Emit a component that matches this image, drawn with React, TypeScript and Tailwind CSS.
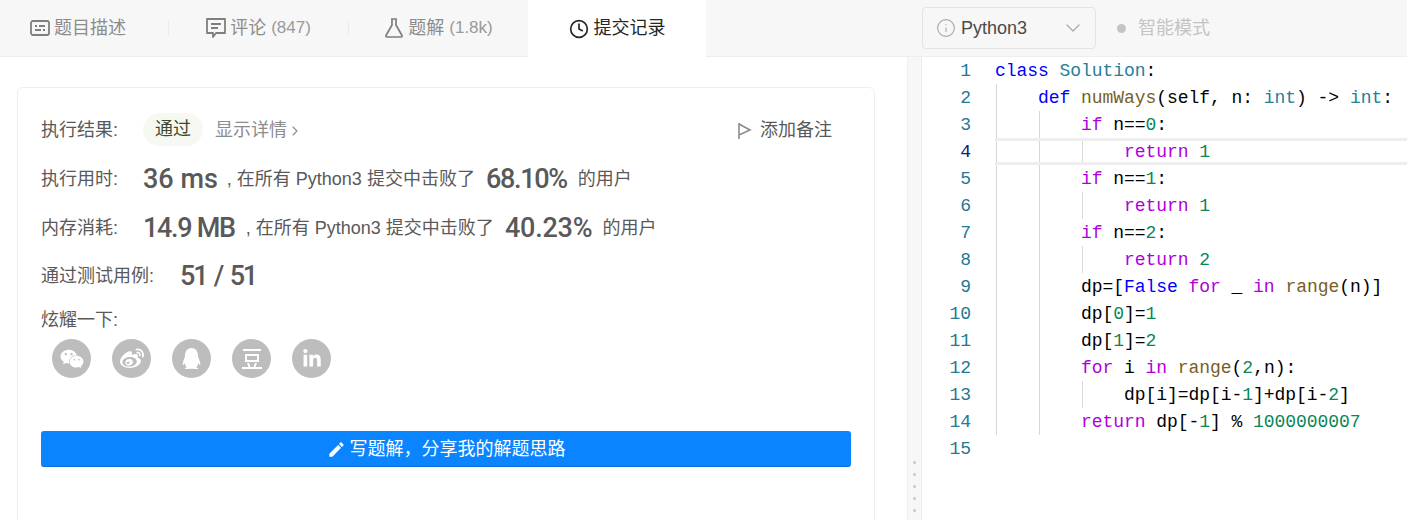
import { ChevronDown, ChevronRight, Clock, Info } from "lucide-react";
import { FaLinkedinIn, FaQq, FaWeibo, FaWeixin } from "react-icons/fa";
import { MdEdit } from "react-icons/md";
import type { ReactNode } from "react";

const sans = "font-['Liberation_Sans','Noto_Sans_CJK_SC',sans-serif]";

type Token = [string, string];

const KW = "text-[#0000ff]";
const CTL = "text-[#af00db]";
const TYPE = "text-[#267f99]";
const FN = "text-[#795e26]";
const NUM = "text-[#098658]";
const TXT = "text-[#000000]";

// one entry per editor line
const codeLines: { guides: number; tokens: Token[] }[] = [
  { guides: 0, tokens: [["class", KW], [" ", TXT], ["Solution", TYPE], [":", TXT]] },
  { guides: 1, tokens: [["    ", TXT], ["def", KW], [" ", TXT], ["numWays", FN], ["(self, n: ", TXT], ["int", TYPE], [") -> ", TXT], ["int", TYPE], [":", TXT]] },
  { guides: 2, tokens: [["        ", TXT], ["if", CTL], [" n==", TXT], ["0", NUM], [":", TXT]] },
  { guides: 3, tokens: [["            ", TXT], ["return", CTL], [" ", TXT], ["1", NUM]] },
  { guides: 2, tokens: [["        ", TXT], ["if", CTL], [" n==", TXT], ["1", NUM], [":", TXT]] },
  { guides: 3, tokens: [["            ", TXT], ["return", CTL], [" ", TXT], ["1", NUM]] },
  { guides: 2, tokens: [["        ", TXT], ["if", CTL], [" n==", TXT], ["2", NUM], [":", TXT]] },
  { guides: 3, tokens: [["            ", TXT], ["return", CTL], [" ", TXT], ["2", NUM]] },
  { guides: 2, tokens: [["        dp=[", TXT], ["False", KW], [" ", TXT], ["for", CTL], [" _ ", TXT], ["in", CTL], [" ", TXT], ["range", FN], ["(n)]", TXT]] },
  { guides: 2, tokens: [["        dp[", TXT], ["0", NUM], ["]=", TXT], ["1", NUM]] },
  { guides: 2, tokens: [["        dp[", TXT], ["1", NUM], ["]=", TXT], ["2", NUM]] },
  { guides: 2, tokens: [["        ", TXT], ["for", CTL], [" i ", TXT], ["in", CTL], [" ", TXT], ["range", FN], ["(", TXT], ["2", NUM], [",n):", TXT]] },
  { guides: 3, tokens: [["            dp[i]=dp[i-", TXT], ["1", NUM], ["]+dp[i-", TXT], ["2", NUM], ["]", TXT]] },
  { guides: 2, tokens: [["        ", TXT], ["return", CTL], [" dp[-", TXT], ["1", NUM], ["] % ", TXT], ["1000000007", NUM]] },
  { guides: 0, tokens: [] },
];

function DescIcon() {
  return (
    <svg width="20" height="20" viewBox="0 0 20 20" fill="none" stroke="#7f7f7f" strokeWidth="1.8">
      <rect x="1" y="3" width="18" height="14" rx="2" />
      <path d="M5 8h2M9 8h6M5 12h6M13 12h2" />
    </svg>
  );
}

function CommentIcon() {
  return (
    <svg width="20" height="20" viewBox="0 0 20 20" fill="none" stroke="#7f7f7f" strokeWidth="1.8">
      <path d="M1 1h18v14H10l-3 4v-4H1z" strokeLinejoin="round" />
      <path d="M5 6h10M5 10h7" />
    </svg>
  );
}

function FlaskIcon() {
  return (
    <svg width="20" height="20" viewBox="0 0 20 20" fill="none" stroke="#7f7f7f" strokeWidth="1.7">
      <path d="M7 1h6M8 1v6L2 17.5q-.5 1.5 1 1.5h14q1.5 0 1-1.5L12 7V1" strokeLinejoin="round" />
    </svg>
  );
}

function DoubanIcon() {
  return (
    <svg width="24" height="24" viewBox="0 0 24 24" fill="none" stroke="white" strokeWidth="2">
      <path d="M3 3h18M6 8h12v6H6zM8 16l1.5 4M16 16l-1.5 4M2 21h20" />
    </svg>
  );
}

function Tab({ icon, label, count, className }: { icon: ReactNode; label: string; count?: string; className: string }) {
  return (
    <div className={`flex h-[56px] items-center justify-center gap-[4px] text-[18px] text-[#8c8c8c] ${className}`}>
      {icon}
      <span>{label}</span>
      {count && <span className="ml-[1px] text-[17px] text-[#9a9a9a]">{count}</span>}
    </div>
  );
}

function Stat({ children, className = "" }: { children: ReactNode; className?: string }) {
  return <span className={`font-['Roboto',sans-serif] font-medium text-[27px] text-[#595959] ${className}`}>{children}</span>;
}

function SocialBtn({ children }: { children: ReactNode }) {
  return <div className="flex h-[39px] w-[39px] items-center justify-center rounded-full bg-[#bdbdbd] text-white">{children}</div>;
}

export default function App() {
  return (
    <div className={`flex h-[520px] w-[1407px] flex-col overflow-hidden bg-white ${sans}`}>
      {/* top bar */}
      <div className="flex h-[57px] shrink-0 border-b border-[#eeeeee] bg-[#f7f7f7]">
        <div className="flex w-[706px] shrink-0">
          <div className="flex h-[56px] w-[168px] items-center">
            <Tab icon={<DescIcon />} label="题目描述" className="w-full pr-[12px]" />
          </div>
          <div className="my-[20px] w-px bg-[#ebebeb]" />
          <Tab icon={<CommentIcon />} label="评论" count="(847)" className="w-[179px]" />
          <div className="my-[20px] w-px bg-[#ebebeb]" />
          <Tab icon={<FlaskIcon />} label="题解" count="(1.8k)" className="w-[179px]" />
          <div className="z-10 flex h-[57px] w-[178px] items-center justify-center gap-[5px] bg-white text-[18px] text-[#262626]">
            <Clock size={20} strokeWidth={2} />
            <span>提交记录</span>
          </div>
        </div>
        <div className="ml-[216px] flex items-center">
          <div className="flex h-[42px] w-[174px] items-center rounded-[4px] border border-[#e4e4e4] pl-[13px] pr-[10px] text-[#595959]">
            <Info size={20} strokeWidth={1.4} className="text-[#a8a8a8]" />
            <span className="ml-[5px] flex-1 text-[18px] text-[#4a4a4a]">Python3</span>
            <ChevronDown size={24} strokeWidth={1.2} className="text-[#a8a8a8]" />
          </div>
          <div className="ml-[21px] h-[9px] w-[9px] rounded-full bg-[#c4c4c4]" />
          <span className="ml-[12px] text-[18px] text-[#c4c4c4]">智能模式</span>
        </div>
      </div>

      <div className="flex min-h-0 flex-1">
        {/* left pane */}
        <div className="w-[907px] shrink-0 pl-[17px] pr-[32px] pt-[30px]">
          <div className="h-[460px] rounded-[6px] border border-[#eeeeee] pl-[23px] pr-[23px] pt-[26px] text-[18px] text-[#595959]">
            <div className="flex h-[33px] items-center">
              <span className="w-[102px]">执行结果:</span>
              <span className="mb-[2px] flex h-[33px] w-[60px] items-center justify-center rounded-full bg-[#f6f9f1] text-[#3d4a2f]">通过</span>
              <span className="ml-[12px] text-[#8c8c8c]">显示详情</span>
              <ChevronRight size={16} strokeWidth={1.6} className="text-[#8c8c8c]" />
              <svg className="ml-[434px]" width="16" height="18" viewBox="0 0 16 18" fill="none" stroke="#8c8c8c" strokeWidth="1.6">
                <path d="M2 1v16M2 2l11 6-11 5" />
              </svg>
              <span className="ml-[7px]">添加备注</span>
            </div>
            <div className="mt-[16px] flex h-[33px] items-center">
              <span className="w-[102px]">执行用时:</span>
              <Stat>36 ms</Stat>
              <span className="ml-[9px]">, 在所有 Python3 提交中击败了</span>
              <Stat className="ml-[11px] tracking-[-1.3px]">68.10%</Stat>
              <span className="ml-[11px]">的用户</span>
            </div>
            <div className="mt-[16px] flex h-[33px] items-center">
              <span className="w-[102px]">内存消耗:</span>
              <Stat className="tracking-[-1.3px]">14.9 MB</Stat>
              <span className="ml-[11px]">, 在所有 Python3 提交中击败了</span>
              <Stat className="ml-[11px] tracking-[-0.2px]">40.23%</Stat>
              <span className="ml-[10px]">的用户</span>
            </div>
            <div className="mt-[15px] flex h-[33px] items-center">
              <span className="w-[139px]">通过测试用例:</span>
              <Stat className="tracking-[-2.2px] [word-spacing:3px]">51 / 51</Stat>
            </div>
            <div className="mt-[15px] leading-[24px]">炫耀一下:</div>
            <div className="ml-[11px] mt-[7px] flex gap-[21px]">
              <SocialBtn><FaWeixin size={24} /></SocialBtn>
              <SocialBtn><FaWeibo size={24} /></SocialBtn>
              <SocialBtn><FaQq size={21} /></SocialBtn>
              <SocialBtn><DoubanIcon /></SocialBtn>
              <SocialBtn><FaLinkedinIn size={20} /></SocialBtn>
            </div>
            <button className="mt-[53px] flex h-[36px] w-[810px] items-center justify-center gap-[4px] rounded-[3px] border-b border-[#0b6fd6] bg-[#0a84ff] pt-[2px] text-[18px] text-white">
              <MdEdit size={19} />
              <span>写题解，分享我的解题思路</span>
            </button>
          </div>
        </div>

        {/* splitter */}
        <div className="flex w-[15px] shrink-0 flex-col items-center justify-end gap-[9px] border-x border-[#eeeeee] bg-[#f7f7f7] pb-[8px]">
          {[0, 1, 2, 3, 4].map((i) => (
            <div key={i} className="h-[3px] w-[3px] rounded-full bg-[#c8c8c8]" />
          ))}
        </div>

        {/* editor */}
        <div className="min-w-0 flex-1 overflow-hidden font-['Liberation_Mono','DejaVu_Sans_Mono',monospace] text-[18px]">
          {codeLines.map((line, idx) => (
            <div key={idx} className={`flex h-[27px] ${idx === 3 ? "leading-[21px]" : "leading-[29px]"}`}>
              <div className={`w-[49px] shrink-0 text-right leading-[29px] ${idx === 3 ? "text-[#0b216f]" : "text-[#237893]"}`}>{idx + 1}</div>
              <div className={`relative ml-[24px] flex-1 whitespace-pre tracking-[-0.05px] ${idx === 3 ? "border-y-[3px] border-[#eeeeee] leading-[23px]" : ""}`}>
                {Array.from({ length: line.guides }).map((_, g) => (
                  <span key={g} className={`absolute inset-y-0 w-px bg-[#d8d8d8] ${g === 0 ? "left-[1px]" : g === 1 ? "left-[44px]" : "left-[87px]"}`} />
                ))}
                {line.tokens.map(([text, color], t) => (
                  <span key={t} className={color}>{text}</span>
                ))}
              </div>
            </div>
          ))}
        </div>
      </div>
    </div>
  );
}
